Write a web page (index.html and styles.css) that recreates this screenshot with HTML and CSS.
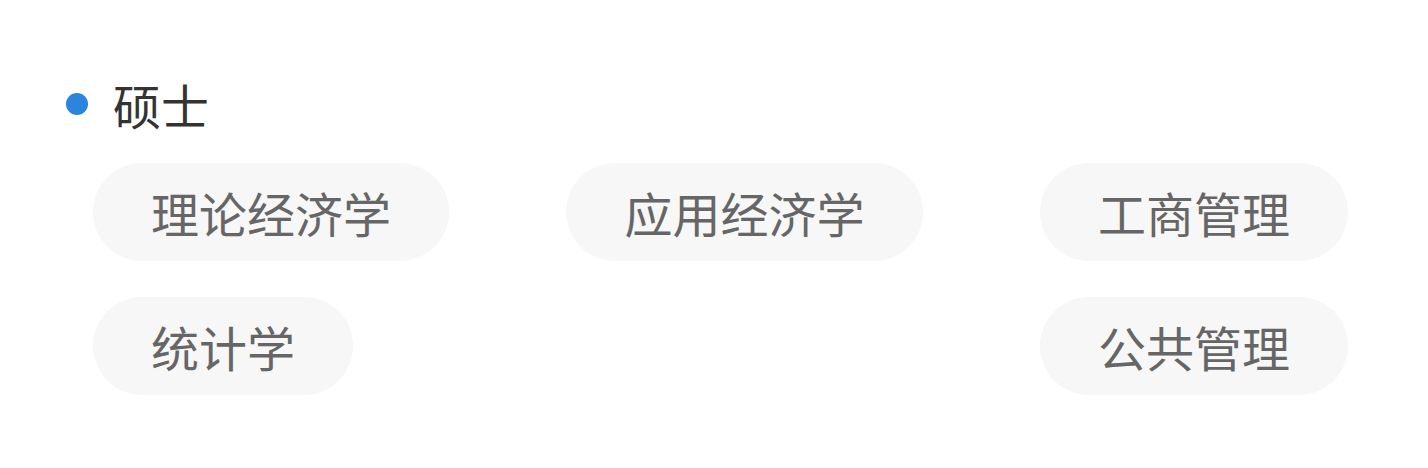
FILE: index.html
```html
<!DOCTYPE html>
<html lang="zh-CN">

<head>
  <meta charset="UTF-8">
  <meta name="viewport" content="width=device-width, initial-scale=1.0">
  <title>专业</title>
  <link rel="stylesheet" href="styles.css">
</head>

<body>
  <div class="degree">
    <div class="degree-title">
      <span class="dot"></span>
      <span class="name">硕士</span>
    </div>
    <div class="tags">
      <span class="tag">理论经济学</span>
      <span class="tag">应用经济学</span>
      <span class="tag">工商管理</span>
      <span class="tag">统计学</span>
      <span class="tag">公共管理</span>
    </div>
  </div>
</body>

</html>
```
FILE: styles.css
```css
* {
  padding: 0;
  margin: 0;
  box-sizing: border-box;
}

body {
  background-color: #fff;
  font-family: "Noto Sans CJK SC", "Noto Sans", sans-serif;
}

.degree {
  padding: 80px 80px 0 66px;
}

.degree-title {
  display: flex;
  align-items: center;
  gap: 25px;
  height: 48px;
}

.dot {
  width: 22px;
  height: 22px;
  border-radius: 50%;
  background-color: #2b84de;
}

.name {
  font-size: 48px;
  line-height: 48px;
  color: #333;
}

.tags {
  display: flex;
  flex-wrap: wrap;
  justify-content: space-between;
  row-gap: 36px;
  margin-top: 35px;
  padding-left: 27px;
}

.tag {
  height: 98px;
  padding: 0 58px;
  border-radius: 49px;
  background-color: #f7f7f7;
  font-size: 48px;
  line-height: 98px;
  color: #666;
}
```
